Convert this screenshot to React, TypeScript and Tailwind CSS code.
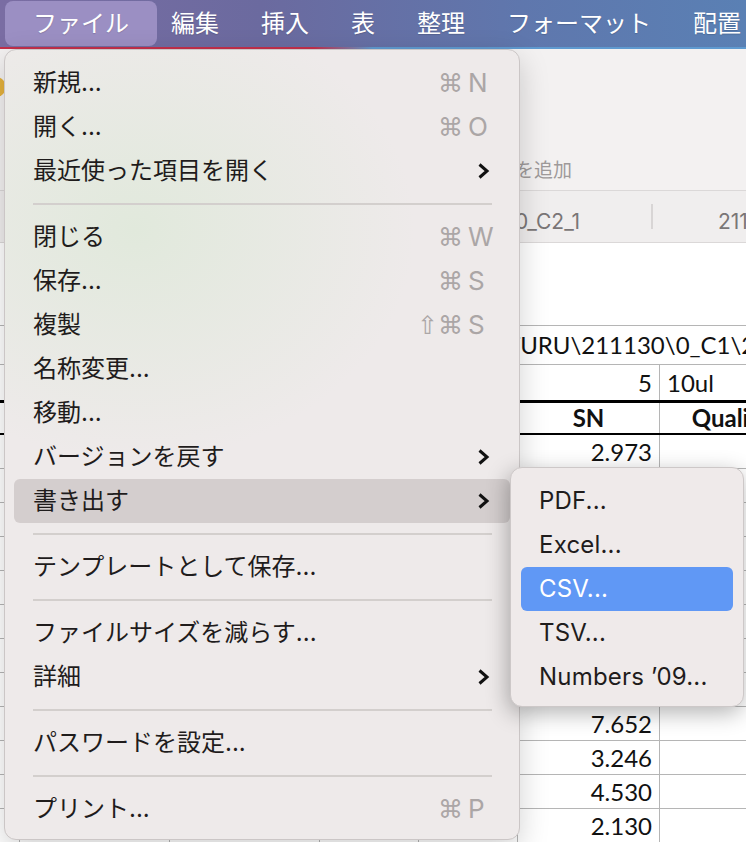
import React from "react";

type MenuRow =
  | { kind: "sep" }
  | { kind: "item"; label: string; mods?: string; key?: string; sub?: boolean; active?: boolean };

const FILE_MENU: MenuRow[] = [
  { kind: "item", label: "新規...", mods: "⌘", key: "N" },
  { kind: "item", label: "開く...", mods: "⌘", key: "O" },
  { kind: "item", label: "最近使った項目を開く", sub: true },
  { kind: "sep" },
  { kind: "item", label: "閉じる", mods: "⌘", key: "W" },
  { kind: "item", label: "保存...", mods: "⌘", key: "S" },
  { kind: "item", label: "複製", mods: "⇧⌘", key: "S" },
  { kind: "item", label: "名称変更..." },
  { kind: "item", label: "移動..." },
  { kind: "item", label: "バージョンを戻す", sub: true },
  { kind: "item", label: "書き出す", sub: true, active: true },
  { kind: "sep" },
  { kind: "item", label: "テンプレートとして保存..." },
  { kind: "sep" },
  { kind: "item", label: "ファイルサイズを減らす..." },
  { kind: "item", label: "詳細", sub: true },
  { kind: "sep" },
  { kind: "item", label: "パスワードを設定..." },
  { kind: "sep" },
  { kind: "item", label: "プリント...", mods: "⌘", key: "P" },
];

const EXPORT_MENU = ["PDF...", "Excel...", "CSV...", "TSV...", "Numbers ’09..."];

const BAR_ITEMS = ["編集", "挿入", "表", "整理", "フォーマット", "配置"];

const DATA = ["2.973", "5.184", "3.902", "6.417", "2.556", "4.081", "3.337", "5.905", "7.652", "3.246", "4.530", "2.130"];

function Chevron() {
  return (
    <svg width="13" height="18" viewBox="0 0 13 18" fill="none">
      <path d="M2.5 2.5 L10 9 L2.5 15.5" stroke="#111" strokeWidth="3" strokeLinejoin="miter" />
    </svg>
  );
}

function Cells({ children }: { children?: React.ReactNode }) {
  return (
    <>
      <div className="w-[20px] shrink-0 border-r border-[#b5b5b5]" />
      <div className="w-[150px] shrink-0 border-r border-[#b5b5b5]" />
      <div className="w-[150px] shrink-0 border-r border-[#b5b5b5]" />
      <div className="w-[99px] shrink-0 border-r border-[#b5b5b5]" />
      <div className="w-[99px] shrink-0 border-r border-[#b5b5b5]" />
      {children}
    </>
  );
}

function FileMenu() {
  return (
    <div className="absolute left-[4px] top-[49px] h-[791px] w-[516px] rounded-[12px] border border-[#cbc6c6] bg-[#eeeaea] bg-[radial-gradient(ellipse_280px_230px_at_130px_180px,#e1e9dc,transparent)] pt-[11px] shadow-[0_10px_30px_rgba(0,0,0,0.18)]">
      {FILE_MENU.map((row, i) =>
        row.kind === "sep" ? (
          <div key={i} className="flex h-[22px] items-center pl-[28px] pr-[27px]">
            <div className="h-[2px] w-full bg-[#d3cfcd]" />
          </div>
        ) : (
          <div
            key={i}
            className={`mx-[9px] flex h-[44px] items-center rounded-[6px] pl-[19px] pr-[18px] ${
              row.active ? "bg-[#d4cece]" : ""
            }`}
          >
            <span className="flex-1 text-[24px] leading-none text-[#1f1c1c]">{row.label}</span>
            {row.mods && (
              <span className="mr-[5px] font-['DejaVu_Sans',sans-serif] text-[25px] leading-none text-[#aba6a6]">
                {row.mods}
              </span>
            )}
            {row.key && (
              <span className="w-[24px] text-[26px] leading-none text-[#aba6a6]">{row.key}</span>
            )}
            {row.sub && (
              <span className="flex w-[24px] justify-end pr-[2px]">
                <Chevron />
              </span>
            )}
          </div>
        )
      )}
    </div>
  );
}

function ExportMenu() {
  return (
    <div className="absolute left-[510px] top-[467px] h-[240px] w-[234px] rounded-[12px] border border-[#cdc8c8] bg-[#efeaea] pt-[11px] shadow-[-2px_6px_22px_rgba(0,0,0,0.3)]">
      {EXPORT_MENU.map((label) => {
        const active = label === "CSV...";
        return (
          <div
            key={label}
            className={`mx-[10px] flex h-[44px] items-center rounded-[6px] pl-[18px] text-[24px] leading-none tracking-[0.2px] ${
              active ? "bg-[#6098f5] text-white" : "text-[#1f1c1c]"
            }`}
          >
            {label}
          </div>
        );
      })}
    </div>
  );
}

export default function App() {
  return (
    <div className="relative h-[842px] w-[746px] overflow-hidden bg-white font-['Inter','Noto_Sans_CJK_JP','DejaVu_Sans',sans-serif]">
      {/* menu bar */}
      <div className="flex h-[47px] items-center bg-[linear-gradient(to_right,#7a6da3,#6b6a9f_35%,#5f77ad_70%,#5a80b4)] text-[24px] leading-none text-white [text-shadow:0_1px_1px_rgba(0,0,0,0.15)]">
        <div className="ml-[5px] flex h-[45px] w-[152px] shrink-0 items-center justify-center rounded-[8px] bg-[#9b8fc3]">
          ファイル
        </div>
        <div className="ml-[14px] flex shrink-0 gap-[42px] whitespace-nowrap">
          {BAR_ITEMS.map((label) => (
            <span key={label}>{label}</span>
          ))}
        </div>
      </div>
      <div className="h-[2px] bg-[linear-gradient(to_right,#c3304b_0%,#c3304b_42%,#5f9ad0_50%,#5f9ad0_100%)]" />

      {/* app toolbar */}
      <div className="flex h-[141px] bg-[#f3f1f1]">
        <div className="mt-[28px] h-[20px] w-[20px] shrink-0 -ml-[14px] rounded-full bg-[#e5b23c]" />
        <div className="flex w-[566px] shrink-0 justify-end pt-[110px] text-[19px] leading-[24px] text-[#9e9a9a]">
          シートを追加
        </div>
      </div>

      {/* sheet tabs */}
      <div className="flex h-[53px] items-center border-y border-[#dbd8d8] bg-[#f0eeee] text-[21px] leading-none text-[#7a7676] whitespace-nowrap">
        <div className="flex w-[651px] shrink-0 justify-end pr-[71px] pt-[10px]">211130_C2_1</div>
        <div className="h-[25px] w-[2px] shrink-0 bg-[#d8d5d5]" />
        <div className="shrink-0 pl-[65px] pt-[10px]">211130_C2_2</div>
      </div>

      <div className="h-[82px] bg-white" />

      {/* table */}
      <div className="font-['Lato',sans-serif] text-[24px] leading-none text-[#111]">
        <div className="flex h-[40px] items-center border-y border-[#b5b5b5] pl-[506px] whitespace-nowrap">
          TURU\211130\0_C1\211130_C1_1.txt
        </div>
        <div className="flex h-[38px] border-b-[3px] border-black">
          <Cells>
            <div className="flex w-[142px] shrink-0 items-center justify-end border-r border-[#b5b5b5] pr-[7px]">5</div>
            <div className="flex w-[142px] shrink-0 items-center pl-[7px]">10ul</div>
          </Cells>
        </div>
        <div className="flex h-[32px] border-b-[2px] border-black font-bold">
          <Cells>
            <div className="flex w-[142px] shrink-0 items-center justify-center border-r border-[#b5b5b5]">SN</div>
            <div className="flex w-[142px] shrink-0 items-center justify-center">Quality</div>
          </Cells>
        </div>
        {DATA.map((v, i) => (
          <div key={i} className="flex h-[34px] border-b border-[#b5b5b5]">
            <Cells>
              <div className="flex w-[142px] shrink-0 items-center justify-end border-r border-[#b5b5b5] pr-[7px]">
                {v}
              </div>
              <div className="w-[142px] shrink-0 border-r border-[#b5b5b5]" />
            </Cells>
          </div>
        ))}
      </div>

      <FileMenu />
      <ExportMenu />
    </div>
  );
}
